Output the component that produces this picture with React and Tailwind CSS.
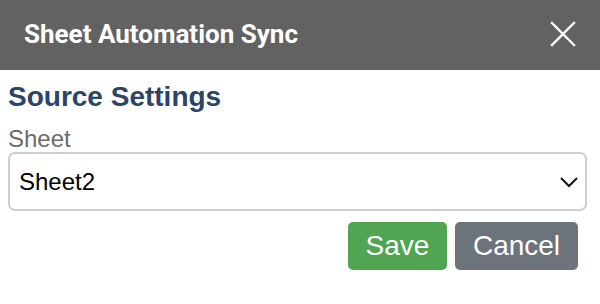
import React from "react";

export default function App() {
  return (
    <div className="w-[600px] h-[304px] bg-white overflow-hidden" style={{ fontFamily: '"Liberation Sans", Arial, sans-serif' }}>
      <div className="h-[70px] bg-[#626262] flex items-center justify-between pl-6 pr-[24px]">
        <div className="text-white text-[26px] font-bold leading-none mt-[-2px]" style={{ fontFamily: 'Roboto, "Liberation Sans", sans-serif' }}>
          Sheet Automation Sync
        </div>
        <svg width="26" height="26" viewBox="0 0 26 26" className="mt-[-2px]">
          <path d="M2 2 L24 24 M24 2 L2 24" stroke="white" strokeWidth="2.4" strokeLinecap="square" />
        </svg>
      </div>
      <div className="pl-2 pr-[13px]">
        <div className="text-[28px] font-bold text-[#2b4468] leading-none mt-[13px]">Source Settings</div>
        <div className="text-[24px] text-[#6b6b6b] leading-none mt-[16px]">Sheet</div>
        <div className="mt-[1px] h-[59px] border-2 border-[#cfcfcf] rounded-[7px] flex items-center justify-between pl-[9px] pr-[5px]">
          <span className="text-[24px] text-black leading-none">Sheet2</span>
          <svg width="22" height="14" viewBox="0 0 22 14">
            <path d="M3 3 L11 11 L19 3" fill="none" stroke="#111" strokeWidth="2" />
          </svg>
        </div>
        <div className="flex justify-end gap-2 mt-[11px] pr-[9px]">
          <button className="w-[99px] h-[48px] rounded-[5px] bg-[#51a552] text-white text-[28px] leading-none">Save</button>
          <button className="w-[123px] h-[48px] rounded-[5px] bg-[#6c737b] text-white text-[28px] leading-none">Cancel</button>
        </div>
      </div>
    </div>
  );
}
